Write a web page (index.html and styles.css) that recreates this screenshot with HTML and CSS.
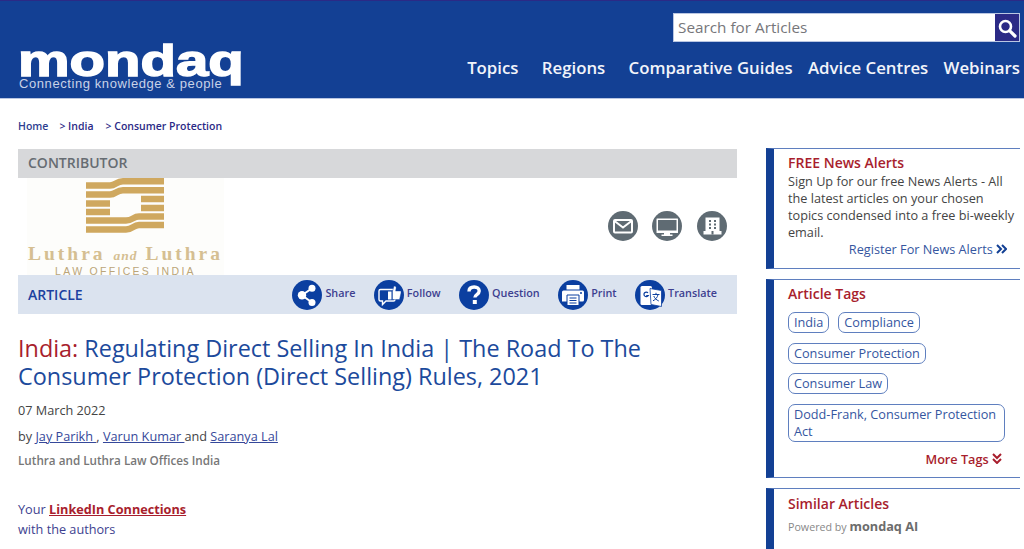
FILE: index.html
```html
<!DOCTYPE html>
<html lang="en">
<head>
<meta charset="utf-8">
<title>Regulating Direct Selling In India</title>
<link rel="stylesheet" href="styles.css">
</head>
<body>
<header class="site-header">
  <a class="logo" href="#">
    <span class="logo-word">mondaq</span>
    <span class="logo-tag">Connecting knowledge &amp; people</span>
  </a>
  <div class="header-right">
    <form class="search">
      <span class="search-text">Search for Articles</span>
      <span class="search-btn">
        <svg width="20" height="20" viewBox="0 0 20 20"><circle cx="8.5" cy="8.5" r="5.5" fill="none" stroke="#fff" stroke-width="2.6"/><path d="M12.8 12.8L18 18" stroke="#fff" stroke-width="3.2" stroke-linecap="round"/></svg>
      </span>
    </form>
    <nav class="main-nav">
      <a href="#">Topics</a><a href="#">Regions</a><a href="#">Comparative Guides</a><a href="#">Advice Centres</a><a href="#">Webinars</a>
    </nav>
  </div>
</header>

<div class="crumbs"><a href="#">Home</a><a href="#">&gt; India</a><a href="#">&gt; Consumer Protection</a></div>

<div class="page">
  <main class="article">
    <div class="contrib-head">CONTRIBUTOR</div>
    <div class="contrib-row">
      <div class="firm-logo">
        <svg class="firm-mark" width="78" height="56" viewBox="0 0 78 56">
          <g fill="none" stroke="#cfa85f" stroke-width="6.4">
            <path d="M0 7.5H24C30 7.5 30 3.2 37 3.2H78"/>
            <path d="M0 16.5H24C30 16.5 30 12.2 37 12.2H78"/>
            <path d="M0 25.5H24M55 21H78"/>
            <path d="M0 34H24M55 30H78"/>
            <path d="M0 42.5H40C47 42.5 47 38.5 53 38.5H78"/>
            <path d="M0 51.5H40C47 51.5 47 47 53 47H78"/>
          </g>
        </svg>
        <div class="firm-name">Luthra <i>and</i> Luthra</div>
        <div class="firm-sub">LAW OFFICES INDIA</div>
      </div>
      <div class="contact-icons">
        <span class="round-grey"><svg width="30" height="30" viewBox="0 0 30 30"><rect x="6" y="9" width="18" height="12.500" rx="1" fill="none" stroke="#fff" stroke-width="2"/><path d="M6.500 10l8.500 6.500 8.500-6.500" fill="none" stroke="#fff" stroke-width="2"/></svg></span>
        <span class="round-grey"><svg width="30" height="30" viewBox="0 0 30 30"><path d="M5 7.500h20.500a.5.5 0 0 1 .5.500v13.500a.5.5 0 0 1-.5.500H18v1.500h2.500V25h-11v-1.500H12V22H5a.5.5 0 0 1-.5-.5V8a.5.5 0 0 1 .5-.5z" fill="#fff"/><rect x="6" y="9" width="18.500" height="10.500" fill="#5f6b73"/></svg></span>
        <span class="round-grey"><svg width="30" height="30" viewBox="0 0 30 30"><path d="M8.500 6.500h14v13.500h2v3.500H6.500V20h2z" fill="#fff"/><path d="M12 9h2v2h-2zM17 9h2v2h-2zM12 12.500h2v2h-2zM17 12.500h2v2h-2zM12 16h2v2h-2zM17 16h2v2h-2zM14.500 20h2v3.500h-2z" fill="#5f6b73"/></svg></span>
      </div>
    </div>
    <div class="article-bar">
      <span class="article-label">ARTICLE</span>
      <div class="actions">
        <a class="action" href="#"><span class="round-blue"><svg width="30" height="30" viewBox="0 0 30 30"><circle cx="10" cy="15.300" r="4.200" fill="#fff"/><circle cx="20" cy="8.200" r="3.500" fill="#fff"/><circle cx="20" cy="22.500" r="3.500" fill="#fff"/><path d="M20 8.200L10 15.300l10 7.200" fill="none" stroke="#fff" stroke-width="2"/></svg></span><span class="action-label">Share</span></a>
        <a class="action" href="#"><span class="round-blue"><svg width="30" height="30" viewBox="0 0 30 30"><path d="M6.500 9.500h13a1.500 1.500 0 0 1 1.500 1.500v8.500a1.500 1.500 0 0 1-1.500 1.500H12l-3.500 3.500V21h-2A1.500 1.500 0 0 1 5 19.500V11a1.500 1.500 0 0 1 1.500-1.500z" fill="none" stroke="#fff" stroke-width="1.400"/><path d="M14 11.500h3.500v8H14z" fill="#fff"/><path d="M18.500 11.500l1.500-5.500c2 0 2.500 1.200 2 3l-.5 2H27v2l-1.500 6.500h-7z" fill="#fff" stroke="#0b3fa0" stroke-width=".4"/></svg></span><span class="action-label">Follow</span></a>
        <a class="action" href="#"><span class="round-blue"><svg width="30" height="30" viewBox="0 0 30 30"><path d="M10 11.500c0-3 2.200-4.500 5.200-4.500s5 1.700 5 4.100c0 3.600-4.300 3.400-4.300 6.400" fill="none" stroke="#fff" stroke-width="3.400"/><rect x="13.800" y="20" width="4" height="4" fill="#fff"/></svg></span><span class="action-label">Question</span></a>
        <a class="action" href="#"><span class="round-blue"><svg width="30" height="30" viewBox="0 0 30 30"><path d="M8.500 5h13v4.500h-13z" fill="#fff"/><path d="M5.500 10.500h19a1.500 1.500 0 0 1 1.500 1.500v8a1.500 1.500 0 0 1-1.500 1.500H4V12a1.500 1.500 0 0 1 1.500-1.500z" fill="#fff"/><circle cx="23" cy="13" r="1" fill="#0b3fa0"/><path d="M9 15h12v10.500H9z" fill="#fff" stroke="#0b3fa0" stroke-width="1"/><path d="M11.500 18h7M11.500 20.500h7M11.500 23h7" stroke="#0b3fa0" stroke-width="1.200"/></svg></span><span class="action-label">Print</span></a>
        <a class="action" href="#"><span class="round-blue"><svg width="30" height="30" viewBox="0 0 30 30"><rect x="5.500" y="6" width="11.500" height="19" rx="1.500" fill="#fff"/><path d="M15 8.500l11.500 2v16l-10.500-2z" fill="#fff" stroke="#0b3fa0" stroke-width=".8"/><path d="M13 12.800a2.300 2.300 0 1 0 .2 2.800h-2" fill="none" stroke="#0b3fa0" stroke-width="1.200"/><path d="M17.500 14.500h7M21 12.800v1.700M23 14.500c-.5 3-2.500 5-5 6.300M18.800 16c.8 2.200 2.700 4 5 5" fill="none" stroke="#0b3fa0" stroke-width="1"/></svg></span><span class="action-label">Translate</span></a>
      </div>
    </div>
    <h1 class="title"><span class="title-loc">India:</span> Regulating Direct Selling In India | The Road To The Consumer Protection (Direct Selling) Rules, 2021</h1>
    <p class="date">07 March 2022</p>
    <p class="authors">by <a href="#">Jay Parikh </a>, <a href="#">Varun Kumar </a>and <a href="#">Saranya Lal</a></p>
    <p class="firm-line">Luthra and Luthra Law Offices India</p>
    <p class="linkedin">Your <a href="#">LinkedIn Connections</a><br>with the authors</p>
  </main>

  <aside class="sidebar">
    <section class="card card-alerts">
      <h2>FREE News Alerts</h2>
      <p>Sign Up for our free News Alerts - All the latest articles on your chosen topics condensed into a free bi-weekly email.</p>
      <a class="register" href="#">Register For News Alerts
        <svg width="11" height="10" viewBox="0 0 11 10"><path d="M1 1l4 4-4 4M6 1l4 4-4 4" fill="none" stroke="#134094" stroke-width="2"/></svg>
      </a>
    </section>
    <section class="card card-tags">
      <h2>Article Tags</h2>
      <div class="tags">
        <a href="#">India</a><a href="#">Compliance</a><a href="#">Consumer Protection</a><a href="#">Consumer Law</a><a href="#">Dodd-Frank, Consumer Protection Act</a>
      </div>
      <a class="more" href="#">More Tags
        <svg width="10" height="11" viewBox="0 0 10 11"><path d="M1 1l4 4 4-4M1 6l4 4 4-4" fill="none" stroke="#a81e2d" stroke-width="2"/></svg>
      </a>
    </section>
    <section class="card card-similar">
      <h2>Similar Articles</h2>
      <p class="powered">Powered by <b>mondaq AI</b></p>
    </section>
  </aside>
</div>
</body>
</html>
```
FILE: styles.css
```css
* { box-sizing: border-box; }
html, body { margin: 0; padding: 0; }
body { font-family: "Open Sans", sans-serif; color: #333; background: #fff; height: 549px; overflow: hidden; }
a { text-decoration: none; color: inherit; }
p, h1, h2 { margin: 0; }

.site-header {
  height: 99px;
  background: #134094;
  border-top: 1px solid #2b2a86;
  border-bottom: 1px solid #b9c6e2;
  display: flex;
  justify-content: space-between;
  padding: 12px 4px 0 19px;
}
.logo { display: block; position: relative; width: 224px; height: 80px; color: #fff; }
.logo-word {
  position: absolute; left: -1.500px; top: 18px;
  font-family: "Liberation Sans", sans-serif; font-weight: 700; font-size: 45px; line-height: 60px;
  transform-origin: left top; transform: scaleX(1.29);
  -webkit-text-stroke: 1.500px #fff;
}
.logo-tag {
  position: absolute; left: 0; top: 63px;
  font-family: "Liberation Sans", sans-serif; font-size: 13px; line-height: 15px; color: #c8d2e8; letter-spacing: .58px; white-space: nowrap;
}
.header-right { display: flex; flex-direction: column; align-items: flex-end; }
.search {
  width: 347px; height: 29px; background: #fff; border: 1px solid #b9c6e2;
  display: flex; justify-content: space-between; align-items: stretch;
}
.search-text { font-size: 15.300px; line-height: 27px; padding-left: 4px; color: #76767a; }
.search-btn { width: 24px; background: #2b2a86; display: flex; align-items: center; justify-content: center; }
.main-nav { display: flex; margin-top: 13px; gap: 23.300px; font-size: 16.800px; font-weight: 600; line-height: 25px; color: #f2f4fa; }
.main-nav a:nth-child(4), .main-nav a:nth-child(5) { margin-left: -8px; }

.crumbs { padding: 20px 0 0 18px; height: 50px; font-size: 10.500px; font-weight: 600; line-height: 15px; color: #2b2a86; display: flex; gap: 10px; }
.crumbs a:first-child { color: #2e3d8f; margin-right: 1px; }
.crumbs a:last-child { margin-left: 2px; }

.page { display: flex; padding-left: 18px; gap: 29px; align-items: flex-start; }
.article { width: 719px; }
.contrib-head { height: 29px; background: #d7d8da; color: #666c72; font-size: 14px; font-weight: 600; line-height: 28px; padding-left: 10px; }
.contrib-row { height: 97px; display: flex; justify-content: space-between; }
.firm-logo { width: 197px; height: 97px; margin-left: 9px; background: #fdfdfb; overflow: hidden; display: flex; flex-direction: column; align-items: center; }
.firm-mark { display: block; flex: none; margin-left: -1px; }
.firm-name { font-family: "Liberation Serif", serif; font-size: 19.500px; font-weight: 700; line-height: 20px; letter-spacing: 3px; margin-top: 10px; color: #d5bf92; white-space: nowrap; flex: none; }
.firm-name i { font-size: 13.500px; letter-spacing: 1px; }
.firm-sub { font-family: "Liberation Sans", sans-serif; font-size: 10.500px; line-height: 12px; letter-spacing: 2.300px; color: #bba578; margin-top: -1px; white-space: nowrap; flex: none; }
.contact-icons { display: flex; gap: 14.700px; padding: 33px 10px 0 0; }
.round-grey { width: 30px; height: 30px; border-radius: 50%; background: #5f6b73; display: flex; align-items: center; justify-content: center; }
.round-blue { width: 30px; height: 30px; border-radius: 50%; background: #0b3fa0; display: flex; align-items: center; justify-content: center; flex: none; }
.round-grey svg, .round-blue svg { display: block; }

.article-bar { height: 39px; background: #dbe3ef; display: flex; padding-left: 10px; align-items: center; justify-content: space-between; }
.article-label { font-size: 14px; font-weight: 600; color: #1c40a0; }
.actions { display: flex; gap: 18.200px; margin-right: 20px; }
.action { display: flex; align-items: center; gap: 3.300px; font-size: 10.800px; font-weight: 600; color: #3d3f90; }
.action-label { margin-bottom: 4px; }

.title { margin-top: 20px; font-size: 23.400px; font-weight: 400; line-height: 28px; color: #1c4a9c; }
.title-loc { color: #a81e2d; }
.date { margin-top: 11px; font-size: 12.700px; line-height: 18px; color: #444; }
.authors { margin-top: 8px; font-size: 12.700px; line-height: 18px; color: #444; }
.authors a { color: #35489a; text-decoration: underline; }
.firm-line { margin-top: 7px; font-size: 11.700px; font-weight: 600; line-height: 16px; color: #777; }
.linkedin { margin-top: 31px; font-size: 12.700px; line-height: 20px; color: #3d3f90; }
.linkedin a { color: #a81e2d; font-weight: 700; text-decoration: underline; }

.sidebar { width: 254px; margin-top: -1px; display: flex; flex-direction: column; gap: 10px; }
.card { border-top: 1px solid #5f7fbf; border-bottom: 1px solid #5f7fbf; border-left: 8px solid #134094; padding-left: 14px; padding-right: 4px; }
.card h2 { font-size: 14px; font-weight: 600; line-height: 18px; color: #a81e2d; }
.card-alerts { height: 121px; padding-top: 5px; }
.card-alerts p { margin-top: 1px; font-size: 12.700px; line-height: 17px; color: #444; }
.register { display: block; text-align: right; font-size: 12.700px; line-height: 17px; color: #35569f; padding-right: 9px; margin-top: 0; }
.card-tags { height: 199px; padding-top: 5px; }
.tags { display: flex; flex-wrap: wrap; gap: 9.500px 9px; margin-top: 9px; }
.tags a { display: block; border: 1px solid #5f7fbf; border-radius: 7px; padding: 1px 5px; font-size: 12.700px; line-height: 17px; color: #35569f; }
.tags a:last-child { width: 217px; }
.more { display: block; text-align: right; font-size: 12.700px; font-weight: 600; line-height: 18px; color: #a81e2d; padding-right: 14px; margin-top: 8px; }
.card-similar { height: 80px; padding-top: 6px; border-bottom: 0; }
.powered { margin-top: 6px; font-size: 10.700px; line-height: 15px; color: #888; }
.powered b { font-size: 12.700px; color: #6c6c6c; }
```
